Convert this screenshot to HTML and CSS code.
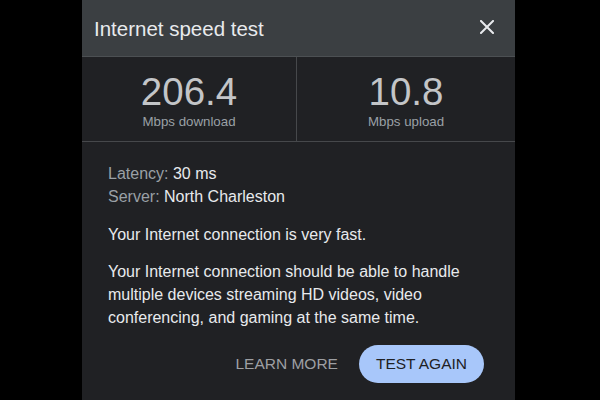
FILE: index.html
```html
<!DOCTYPE html>
<html lang="en">
<head>
    <meta charset="UTF-8">
    <meta name="viewport" content="width=device-width, initial-scale=1.0">
    <title>Internet speed test</title>
    <link rel="stylesheet" href="styles.css">
</head>
<body>
    <div class="panel">
        <div class="header">
            <div class="title">Internet speed test</div>
            <button class="close" aria-label="Close">
                <svg width="14" height="14" viewBox="0 0 14 14">
                    <path d="M1 1 L13 13 M13 1 L1 13" stroke="#e8eaed" stroke-width="2" stroke-linecap="square"/>
                </svg>
            </button>
        </div>

        <div class="stats">
            <div class="stat stat-left">
                <div class="stat-value">206.4</div>
                <div class="stat-label">Mbps download</div>
            </div>
            <div class="stat">
                <div class="stat-value">10.8</div>
                <div class="stat-label">Mbps upload</div>
            </div>
        </div>

        <div class="details">
            <div class="meta">
                <div><span class="meta-key">Latency:</span> 30 ms</div>
                <div><span class="meta-key">Server:</span> North Charleston</div>
            </div>
            <p class="verdict">Your Internet connection is very fast.</p>
            <p class="desc">Your Internet connection should be able to handle multiple devices streaming HD videos, video conferencing, and gaming at the same time.</p>

            <div class="actions">
                <button class="btn btn-text">LEARN MORE</button>
                <button class="btn btn-filled">TEST AGAIN</button>
            </div>
        </div>
    </div>
</body>
</html>
```

FILE: styles.css
```css
body {
    margin: 0;
    background: #000;
    font-family: 'Liberation Sans', Arial, sans-serif;
    color: #e8eaed;
    height: 400px;
    overflow: hidden;
}
.panel {
    width: 433px;
    height: 400px;
    margin-left: 82px;
    background: #202124;
}
.header {
    height: 57px;
    box-sizing: border-box;
    padding: 17px 0 0 12px;
    background: #3b3f42;
    border-bottom: 1px solid #4c5053;
    display: flex;
    justify-content: space-between;
    align-items: flex-start;
}
.title {
    font-size: 20.5px;
    line-height: 24px;
    color: #e8eaed;
}
.close {
    background: none;
    border: none;
    padding: 0;
    margin: 3px 21px 0 0;
    width: 14px;
    height: 14px;
    display: block;
}
.close svg {
    display: block;
}
.stats {
    display: grid;
    grid-template-columns: 215px 1fr;
    height: 85px;
    box-sizing: border-box;
    border-bottom: 1px solid #46484b;
}
.stat {
    padding-top: 16px;
    text-align: center;
}
.stat-left {
    border-right: 1px solid #46484b;
}
.stat-value {
    font-size: 38.5px;
    line-height: 38px;
    color: #c3c5c8;
}
.stat-label {
    margin-top: 3px;
    font-size: 13.3px;
    line-height: 15px;
    color: #9aa0a6;
}
.details {
    padding: 20px 31px 0 26px;
    font-size: 16px;
    line-height: 23px;
}
.meta-key {
    color: #9aa0a6;
}
.verdict {
    margin: 15px 0 0;
}
.desc {
    margin: 14px 0 0;
}
.actions {
    display: flex;
    justify-content: flex-end;
    align-items: center;
    gap: 4px;
    margin-top: 16px;
}
.btn {
    font-family: 'Liberation Sans', Arial, sans-serif;
    font-size: 15.5px;
    height: 38px;
    padding: 0 17px;
    border: none;
    border-radius: 19px;
    background: none;
}
.btn-text {
    color: #9d9fa3;
}
.btn-filled {
    background: #a8c7fa;
    color: #202124;
}
```
